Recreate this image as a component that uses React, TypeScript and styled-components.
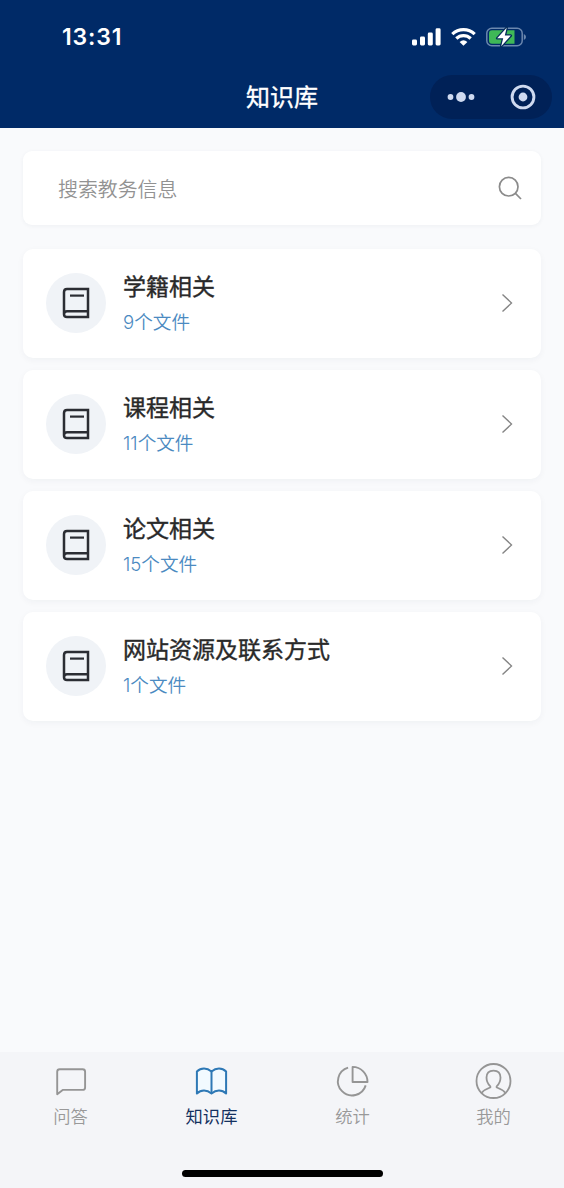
import React from 'react';
import styled, { createGlobalStyle } from 'styled-components';

const GlobalStyle = createGlobalStyle`
  * { box-sizing: border-box; }
  body {
    margin: 0;
    background: #f9fafc;
    font-family: Inter, "Noto Sans CJK SC", sans-serif;
  }
`;

const Screen = styled.div`
  display: flex;
  flex-direction: column;
  width: 564px;
  height: 1188px;
  overflow: hidden;
  background: #f9fafc;
`;

const Header = styled.header`
  flex: none;
  height: 128px;
  background: #002a67;
  color: #fff;
`;

const StatusBar = styled.div`
  display: flex;
  align-items: center;
  justify-content: space-between;
  height: 73px;
  padding: 0 38px 0 62px;
`;

const Clock = styled.span`
  font-size: 23px;
  font-weight: 600;
  line-height: 28px;
  letter-spacing: 0.85px;
`;

const StatusIcons = styled.div`
  display: flex;
  align-items: center;
  gap: 10px;
`;

const NavBar = styled.div`
  display: grid;
  grid-template-columns: 1fr auto 1fr;
  align-items: center;
  height: 48px;
  padding: 0 12px;
`;

const NavTitle = styled.h1`
  grid-column: 2;
  margin: 0;
  padding-top: 2px;
  font-size: 24px;
  font-weight: 400;
  line-height: 36px;
  -webkit-text-stroke: 0.35px currentColor;
`;

const Capsule = styled.div`
  display: flex;
  align-items: center;
  justify-content: space-between;
  justify-self: end;
  width: 122px;
  height: 44px;
  padding: 0 16px 0 17px;
  border-radius: 22px;
  background: #002157;
`;

const Content = styled.main`
  display: flex;
  flex: 1;
  flex-direction: column;
  padding: 23px 23px 0;
`;

const SearchBox = styled.div`
  display: flex;
  align-items: center;
  justify-content: space-between;
  height: 74px;
  margin-bottom: 24px;
  padding: 0 19px 0 35px;
  border-radius: 9px;
  background: #fff;
  box-shadow: 0 1px 4px rgba(30, 50, 80, 0.05);
`;

const Placeholder = styled.span`
  padding-top: 3px;
  color: #929292;
  font-size: 19.9px;
  font-weight: 350;
  line-height: 30px;
`;

const List = styled.div`
  display: flex;
  flex-direction: column;
  gap: 12px;
`;

const Card = styled.div`
  display: flex;
  align-items: center;
  height: 109px;
  padding: 0 28px 2px 23px;
  border-radius: 10px;
  background: #fff;
  box-shadow: 0 2px 7px rgba(30, 50, 80, 0.045);
`;

const IconDisc = styled.div`
  display: grid;
  place-items: center;
  width: 60px;
  height: 60px;
  margin-right: 17px;
  border-radius: 50%;
  background: #f0f3f7;
`;

const CardText = styled.div`
  flex: 1;
  padding-top: 3px;
`;

const CardTitle = styled.div`
  color: #292929;
  font-size: 23px;
  font-weight: 400;
  line-height: 35px;
  -webkit-text-stroke: 0.4px currentColor;
`;

const CardCount = styled.div`
  color: #4b8ac1;
  font-size: 18.6px;
  font-weight: 350;
  line-height: 34px;
`;

const TabBar = styled.nav`
  display: grid;
  grid-template-columns: repeat(4, 1fr);
  flex: none;
  height: 118px;
  background: #f4f5f8;
`;

const Tab = styled.div<{ $active?: boolean }>`
  display: flex;
  flex-direction: column;
  align-items: center;
  padding-top: 10px;
  color: ${(p) => (p.$active ? '#14315f' : '#999')};
  font-size: 17.3px;
  font-weight: ${(p) => (p.$active ? 400 : 350)};
  line-height: 26px;

  svg {
    margin-bottom: 4px;
    color: ${(p) => (p.$active ? '#2e78b5' : '#959595')};
  }
`;

const HomeArea = styled.div`
  flex: none;
  height: 18px;
  background: #f4f5f8;
`;

const HomeIndicator = styled.div`
  width: 201px;
  height: 7px;
  margin: 0 auto;
  border-radius: 4px;
  background: #000;
`;

const SignalIcon = () => (
  <svg width="29" height="18" viewBox="0 0 29 18" fill="#fff">
    <rect x="0" y="11.5" width="5" height="6" rx="1.4" />
    <rect x="8" y="8.5" width="5" height="9" rx="1.4" />
    <rect x="15.8" y="4.5" width="5" height="13" rx="1.4" />
    <rect x="23.6" y="0.3" width="5" height="17.2" rx="1.4" />
  </svg>
);

const WifiIcon = () => (
  <svg width="25" height="18" viewBox="0 0 25 18" fill="none" stroke="#fff" strokeWidth="3.2">
    <path d="M1.3 6.2 A16 16 0 0 1 23.7 6.2" />
    <path d="M5.3 10.5 A10.3 10.3 0 0 1 19.7 10.5" />
    <path d="M12.5 17.8 L8.6 13.9 Q12.5 10.7 16.4 13.9 Z" fill="#fff" stroke="none" />
  </svg>
);

const BatteryIcon = () => (
  <svg width="40" height="22" viewBox="0 0 40 22" fill="none">
    <rect x="0.8" y="2.3" width="35.4" height="17.4" rx="5" stroke="#6b87ae" strokeWidth="1.5" />
    <path d="M37.8 8 Q40 9 40 11 Q40 13 37.8 14 Z" fill="#6b87ae" />
    <path d="M6 4.2 H28.5 V17.8 H6 Q3 17.8 3 14.8 V7.2 Q3 4.2 6 4.2 Z" fill="#3fb857" />
    <path
      d="M20.7 1.8 L11.2 12.3 H17.2 L15.2 20.2 L24.8 9.6 H18.8 Z"
      fill="#fff"
      stroke="#062d5b"
      strokeWidth="2.6"
      strokeLinejoin="round"
      paintOrder="stroke"
    />
  </svg>
);

const MoreIcon = () => (
  <svg width="28" height="12" viewBox="0 0 28 12" fill="#cfdaf0">
    <circle cx="3.5" cy="6" r="2.9" />
    <circle cx="14" cy="6" r="4.9" />
    <circle cx="24.5" cy="6" r="2.9" />
  </svg>
);

const TargetIcon = () => (
  <svg width="26" height="26" viewBox="0 0 26 26">
    <circle cx="13" cy="13" r="10.9" fill="none" stroke="#cfdaf0" strokeWidth="2.9" />
    <circle cx="13" cy="13" r="4.4" fill="#cfdaf0" />
  </svg>
);

const SearchIcon = () => (
  <svg width="24" height="24" viewBox="0 0 24 24" fill="none" stroke="#8b8b8b" strokeWidth="1.7">
    <circle cx="10.7" cy="10.7" r="9.3" />
    <path d="M17.2 17.2 L23 23" />
  </svg>
);

const BookIcon = () => (
  <svg width="28" height="32" viewBox="0 0 28 32" fill="none" stroke="#2b2d33" strokeWidth="2.5">
    <path d="M26 24.2 V2 H5 Q2 2 2 5 V27.2 Q2 30 5 30 H26 V24.2 H5 Q2 24.2 2 27.2" />
    <path d="M8 8.6 H22" strokeWidth="2.2" />
  </svg>
);

const ChevronIcon = () => (
  <svg width="12" height="20" viewBox="0 0 12 20" fill="none" stroke="#858585" strokeWidth="1.4">
    <path d="M1.5 1.4 L10.5 10 L1.5 18.6" />
  </svg>
);

const ChatIcon = () => (
  <svg width="38" height="38" viewBox="0 0 38 38" fill="none" stroke="currentColor" strokeWidth="1.9">
    <path d="M5.2 32.2 V9.8 Q5.2 7.3 7.7 7.3 H30.6 Q33.1 7.3 33.1 9.8 V25.4 Q33.1 27.9 30.6 27.9 H10.7 Z" strokeLinejoin="round" />
  </svg>
);

const OpenBookIcon = () => (
  <svg width="38" height="38" viewBox="0.5 0 38 38" fill="none" stroke="currentColor" strokeWidth="2" strokeLinejoin="round">
    <path d="M19 31.5 Q15.5 28.5 11.5 28.5 Q7.5 28.5 4.4 31.5 V9.5 Q7.5 6.5 11.5 6.5 Q15.5 6.5 19 9.5 Q22.5 6.5 26.5 6.5 Q30.5 6.5 33.6 9.5 V31.5 Q30.5 28.5 26.5 28.5 Q22.5 28.5 19 31.5 Z" fill="#f2faff" />
    <path d="M19 9.5 V31.5" />
  </svg>
);

const PieIcon = () => (
  <svg width="38" height="38" viewBox="0.5 0 38 38" fill="none" stroke="currentColor" strokeWidth="1.9">
    <path d="M14.6 5.6 A14.2 14.2 0 1 0 32.2 23.4" />
    <path d="M19.1 4.9 V20 H34 A15 15 0 0 0 19.1 4.9 Z" strokeLinejoin="round" />
  </svg>
);

const PersonIcon = () => (
  <svg width="38" height="38" viewBox="0.5 0 38 38" fill="none" stroke="currentColor" strokeWidth="1.8">
    <circle cx="19" cy="19" r="17" />
    <path d="M7 31 Q9.8 27.6 15.6 25.5 Q16.3 25 15.6 24.2 Q12 20.5 12 15.6 Q12 8.6 19 8.6 Q26 8.6 26 15.6 Q26 20.5 22.4 24.2 Q21.7 25 22.4 25.5 Q28.2 27.6 31 31" />
  </svg>
);

const categories = [
  { title: '学籍相关', count: 9 },
  { title: '课程相关', count: 11 },
  { title: '论文相关', count: 15 },
  { title: '网站资源及联系方式', count: 1 },
];

const tabs = [
  { label: '问答', Icon: ChatIcon },
  { label: '知识库', Icon: OpenBookIcon, active: true },
  { label: '统计', Icon: PieIcon },
  { label: '我的', Icon: PersonIcon },
];

export default function App() {
  return (
    <Screen>
      <GlobalStyle />
      <Header>
        <StatusBar>
          <Clock>13:31</Clock>
          <StatusIcons>
            <SignalIcon />
            <WifiIcon />
            <BatteryIcon />
          </StatusIcons>
        </StatusBar>
        <NavBar>
          <NavTitle>知识库</NavTitle>
          <Capsule>
            <MoreIcon />
            <TargetIcon />
          </Capsule>
        </NavBar>
      </Header>
      <Content>
        <SearchBox>
          <Placeholder>搜索教务信息</Placeholder>
          <SearchIcon />
        </SearchBox>
        <List>
          {categories.map(({ title, count }) => (
            <Card key={title}>
              <IconDisc>
                <BookIcon />
              </IconDisc>
              <CardText>
                <CardTitle>{title}</CardTitle>
                <CardCount>{count}个文件</CardCount>
              </CardText>
              <ChevronIcon />
            </Card>
          ))}
        </List>
      </Content>
      <TabBar>
        {tabs.map(({ label, Icon, active }) => (
          <Tab key={label} $active={active}>
            <Icon />
            {label}
          </Tab>
        ))}
      </TabBar>
      <HomeArea>
        <HomeIndicator />
      </HomeArea>
    </Screen>
  );
}
